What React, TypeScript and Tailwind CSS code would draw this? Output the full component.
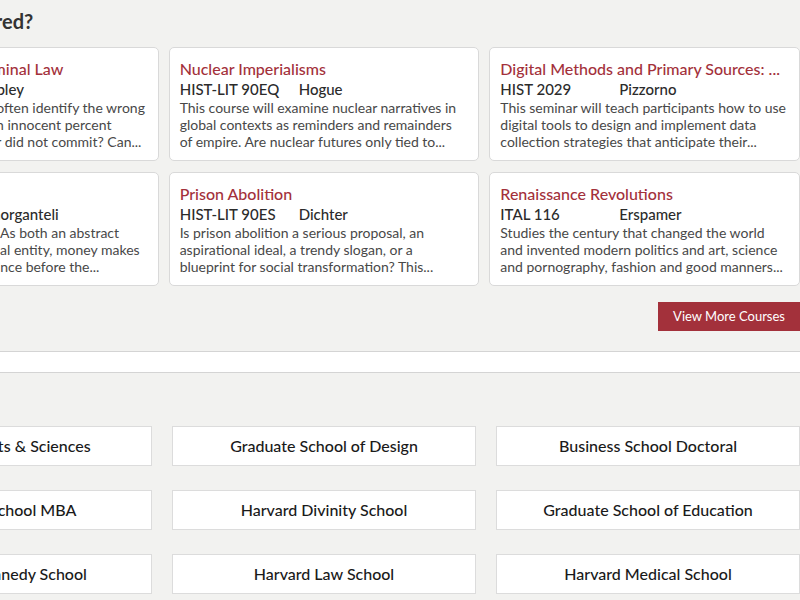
const COURSES = [
  {
    title: "Psychology and Criminal Law",
    code: "PSY 1504",
    instructor: "Copley",
    lines: [
      "Why do eyewitnesses often identify the wrong",
      "suspect? Why would an innocent percent",
      "to a crime their brother did not commit? Can...",
    ],
  },
  {
    title: "Nuclear Imperialisms",
    code: "HIST-LIT 90EQ",
    instructor: "Hogue",
    lines: [
      "This course will examine nuclear narratives in",
      "global contexts as reminders and remainders",
      "of empire. Are nuclear futures only tied to...",
    ],
  },
  {
    title: "Digital Methods and Primary Sources: ...",
    code: "HIST 2029",
    instructor: "Pizzorno",
    lines: [
      "This seminar will teach participants how to use",
      "digital tools to design and implement data",
      "collection strategies that anticipate their...",
    ],
  },
  {
    title: "A History of Money",
    code: "HIST 1260",
    instructor: "Amorganteli",
    lines: [
      "What is money, really? As both an abstract",
      "concept and is a physical entity, money makes",
      "its marks in every province before the...",
    ],
  },
  {
    title: "Prison Abolition",
    code: "HIST-LIT 90ES",
    instructor: "Dichter",
    lines: [
      "Is prison abolition a serious proposal, an",
      "aspirational ideal, a trendy slogan, or a",
      "blueprint for social transformation? This...",
    ],
  },
  {
    title: "Renaissance Revolutions",
    code: "ITAL 116",
    instructor: "Erspamer",
    lines: [
      "Studies the century that changed the world",
      "and invented modern politics and art, science",
      "and pornography, fashion and good manners...",
    ],
  },
];

const SCHOOLS = [
  "Faculty of Arts & Sciences",
  "Graduate School of Design",
  "Business School Doctoral",
  "Business School MBA",
  "Harvard Divinity School",
  "Graduate School of Education",
  "Harvard Kennedy School",
  "Harvard Law School",
  "Harvard Medical School",
];

type Course = (typeof COURSES)[number];

function CourseCard({ course }: { course: Course }) {
  return (
    <div className="bg-white border border-[#d9d9d9] rounded-[5px] px-[10px] pt-[10px] pb-[10px]">
      <h3 className="text-[16px] leading-[22px] font-medium text-[#a3313b] whitespace-nowrap">{course.title}</h3>
      <div className="grid grid-cols-[119px_1fr] text-[15px] leading-[18px] font-medium text-[#2b2b2b]">
        <span>{course.code}</span>
        <span>{course.instructor}</span>
      </div>
      <p className="mt-[1px] text-[14px] leading-[17px] text-[#484848]">
        {course.lines.map((line) => (
          <span key={line} className="block whitespace-nowrap">
            {line}
          </span>
        ))}
      </p>
    </div>
  );
}

export default function App() {
  return (
    <div className="w-[800px] h-[600px] overflow-hidden bg-[#f2f2f0] font-['Lato','Open_Sans',sans-serif]">
      <section className="border-b border-[#d4d4d4]">
        <div className="ml-[-152px] w-[952px] pt-[9px] pb-[20px]">
          <h2 className="text-[20px] leading-[24px] font-bold text-[#333]">What Art Is Offered?</h2>
          <div className="mt-[14px] grid grid-cols-3 gap-x-[10px] gap-y-[11px]">
            {COURSES.map((c) => (
              <CourseCard key={c.title} course={c} />
            ))}
          </div>
          <div className="mt-[16px] flex justify-end">
            <button className="h-[29px] px-[15px] bg-[#a3313b] text-white text-[13px] leading-[29px]">
              View More Courses
            </button>
          </div>
        </div>
      </section>
      <div className="h-[20px] bg-white" />
      <section className="border-t border-[#d4d4d4]">
        <div className="ml-[-152px] w-[952px] pt-[53px] grid grid-cols-3 gap-x-[20px] gap-y-[24px]">
          {SCHOOLS.map((s) => (
            <div
              key={s}
              className="h-[40px] bg-white border border-[#dcdcdc] flex items-center justify-center text-[16px] font-medium text-[#1a1a1a] whitespace-nowrap"
            >
              {s}
            </div>
          ))}
        </div>
      </section>
    </div>
  );
}
